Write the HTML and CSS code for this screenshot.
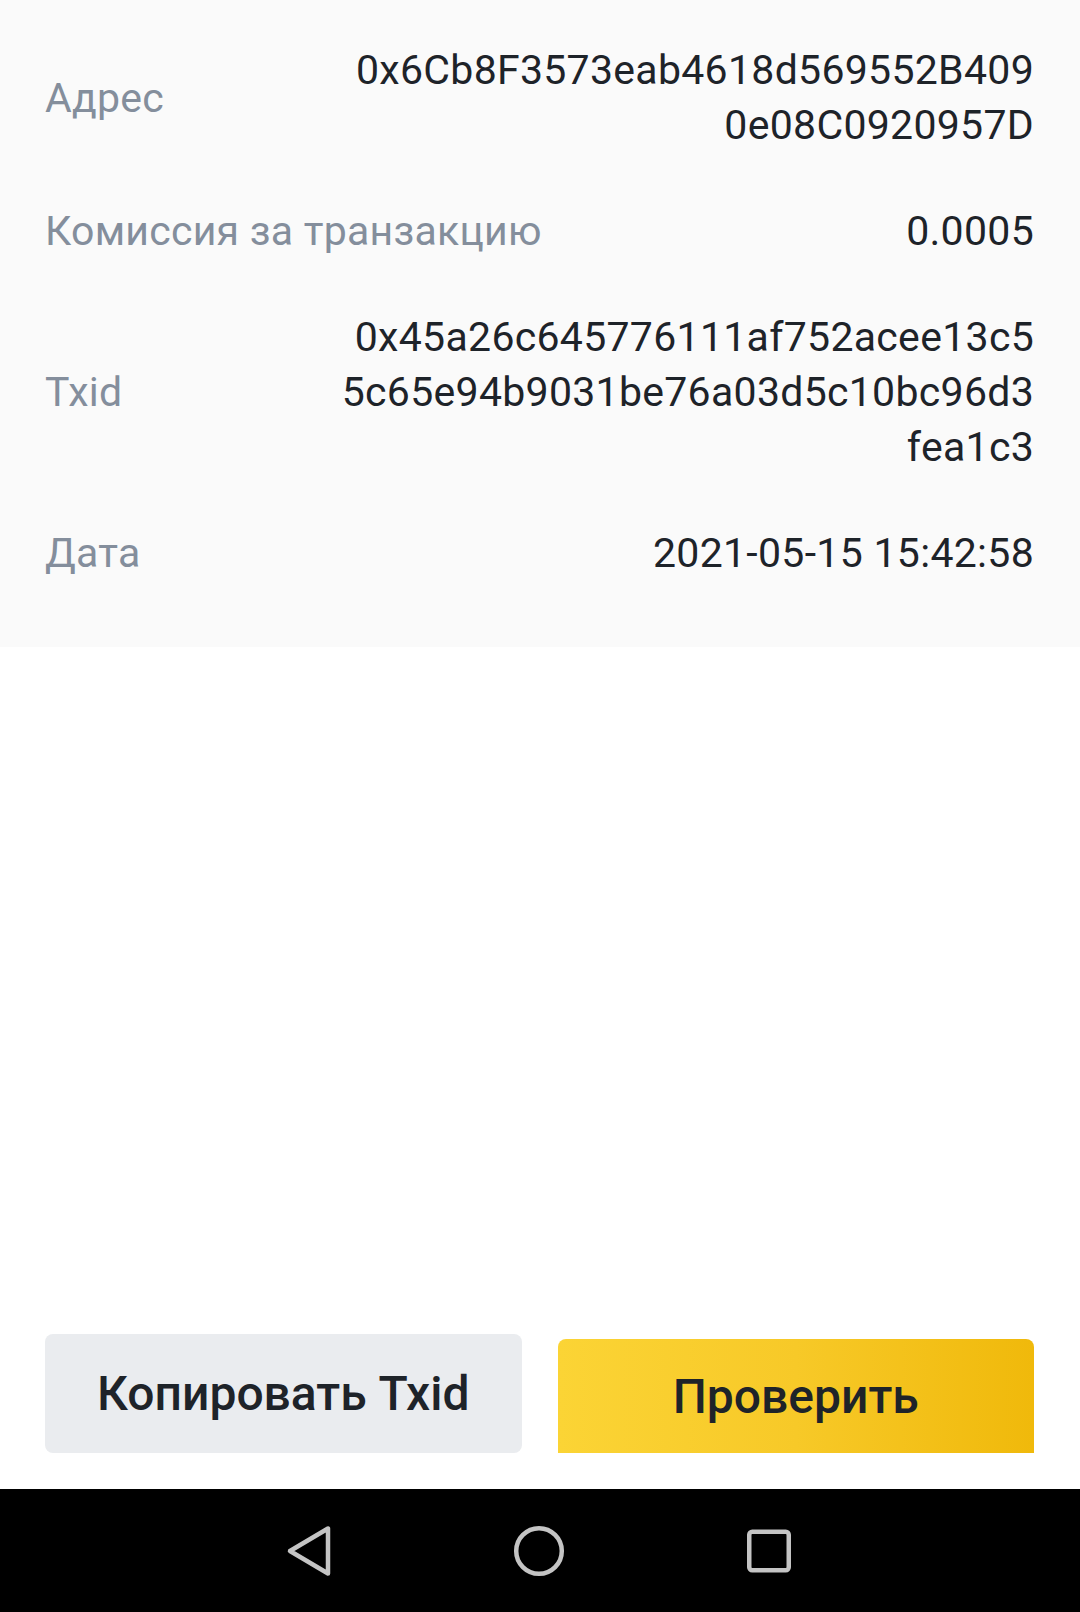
FILE: index.html
```html
<!DOCTYPE html>
<html lang="ru">
<head>
<meta charset="utf-8">
<title>Детали транзакции</title>
<link rel="stylesheet" href="styles.css">
</head>
<body>
<div class="screen">
  <section class="details">
    <div class="row">
      <div class="label">Адрес</div>
      <div class="value">0x6Cb8F3573eab4618d569552B409<br>0e08C0920957D</div>
    </div>
    <div class="row">
      <div class="label">Комиссия за транзакцию</div>
      <div class="value">0.0005</div>
    </div>
    <div class="row">
      <div class="label">Txid</div>
      <div class="value">0x45a26c645776111af752acee13c5<br>5c65e94b9031be76a03d5c10bc96d3<br>fea1c3</div>
    </div>
    <div class="row">
      <div class="label">Дата</div>
      <div class="value">2021-05-15 15:42:58</div>
    </div>
  </section>
  <div class="spacer"></div>
  <div class="actions">
    <button class="btn btn-secondary">Копировать Txid</button>
    <button class="btn btn-primary">Проверить</button>
  </div>
  <nav class="navbar">
    <svg class="nav-icon" viewBox="0 0 60 60" width="60" height="60"><path d="M11 30 L49 7.5 L49 52.5 Z" fill="none" stroke="#c4c4c4" stroke-width="4.5" stroke-linejoin="round"/></svg>
    <svg class="nav-icon" viewBox="0 0 60 60" width="60" height="60"><circle cx="30" cy="30" r="22.8" fill="none" stroke="#c4c4c4" stroke-width="4.5"/></svg>
    <svg class="nav-icon" viewBox="0 0 60 60" width="60" height="60"><rect x="10.25" y="10.75" width="39.5" height="38.5" rx="3" fill="none" stroke="#c4c4c4" stroke-width="4.5"/></svg>
  </nav>
</div>
</body>
</html>
```

FILE: styles.css
```css
* { box-sizing: border-box; }
html, body { margin: 0; padding: 0; background: #ffffff; }
body { font-family: Roboto, "Noto Sans", sans-serif; }

.screen {
  width: 1080px;
  height: 1612px;
  display: flex;
  flex-direction: column;
}

.details {
  background: #fafafa;
  padding: 43px 46px 66px 45px;
  display: flex;
  flex-direction: column;
  gap: 51px;
}

.row {
  display: flex;
  justify-content: space-between;
  align-items: center;
  font-size: 41px;
  line-height: 55px;
}

.label {
  color: #848e9c;
  white-space: nowrap;
  letter-spacing: 0.25px;
}

.value {
  color: #1e2329;
  text-align: right;
  letter-spacing: 0.3px;
}

.spacer { flex: 1; }

.actions {
  display: flex;
  align-items: flex-end;
  gap: 36px;
  padding: 0 46px 36px 45px;
}

.btn {
  flex: 1;
  border: none;
  font-family: Roboto, "Noto Sans", sans-serif;
  font-size: 48px;
  font-weight: 500;
  color: #1e2329;
  display: flex;
  align-items: center;
  justify-content: center;
  padding: 0;
}

.btn-secondary {
  height: 119px;
  background: #eaecef;
  border-radius: 8px;
}

.btn-primary {
  height: 114px;
  background: linear-gradient(90deg, #fbd435 0%, #f7c928 50%, #f0b90b 100%);
  border-radius: 8px 8px 0 0;
}

.navbar {
  height: 123px;
  background: #000000;
  display: flex;
  align-items: center;
  justify-content: center;
  gap: 170px;
  padding-right: 2px;
}

.nav-icon { display: block; }
```
